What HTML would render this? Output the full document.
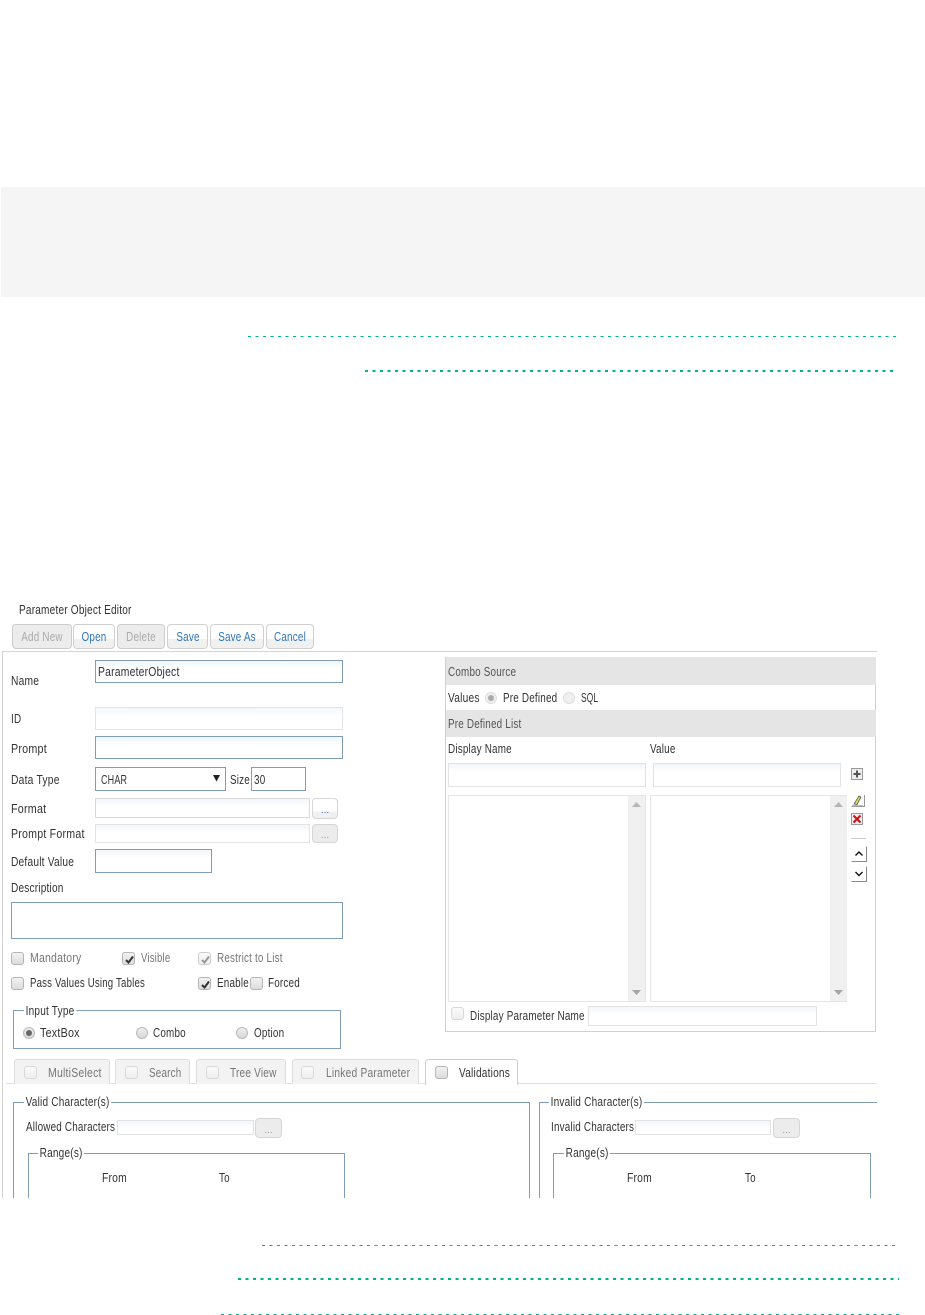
<!DOCTYPE html>
<html><head><meta charset="utf-8"><title>Parameter Object Editor</title>
<style>
html,body{margin:0;padding:0;background:#fff}
body{width:925px;height:1315px;position:relative;overflow:hidden;font-family:"Liberation Sans",sans-serif;font-size:12.5px;color:#333}
#c{position:absolute;left:0;top:0;width:925px;height:1198px;overflow:hidden}
#c *,body>*{position:absolute;box-sizing:border-box}
.t{white-space:nowrap;line-height:14px;height:14px;letter-spacing:.25px;transform:scaleX(.79);transform-origin:0 0}
.g{color:#777}
.btn{height:25px;top:624px;border:1px solid #d0d0d0;border-radius:4px;background:linear-gradient(#fff 60%,#f0f0f0 60%);line-height:24px;color:#2f75b5;white-space:nowrap;letter-spacing:.25px}
.btn span{left:50%;top:0;transform:translateX(-50%) scaleX(.79)}
.btn.d{background:#ececec;color:#aaa;border-color:#ccc}
.i{border:1px solid #7f9db9;background:linear-gradient(#f1f6fb,#fff 8px)}
.l{border:1px solid #e3e3e3;background:linear-gradient(#f1f6fb,#fff 8px)}
.el{border:1px solid #d6d6d6;border-radius:4px;background:linear-gradient(#fff 65%,#f0f0f0 65%);color:#2f75b5;text-align:center;font-size:10px;line-height:24px}
.el.d{background:#ececec;color:#999}
.cb{width:13px;height:13px;border:1px solid #b5b5b5;border-radius:3px;background:linear-gradient(#f2f2f2,#dcdcdc)}
.cb.f{border-color:#d8d8d8;background:linear-gradient(#fafafa,#efefef)}
.cb svg{left:1px;top:1px}
.r{width:12px;height:12px;border:1px solid #bbb;border-radius:50%;background:linear-gradient(#eee,#d8d8d8)}
.r i{left:2px;top:2px;width:6px;height:6px;border-radius:50%;background:#666}
.fs{border:1px solid #7f9db9}
.lg{background:#fff;padding:0 2px;white-space:nowrap;line-height:14px;height:14px;letter-spacing:.25px;transform:scaleX(.805);transform-origin:0 0}
.tab{top:1059px;height:25px;border:1px solid #ddd;border-bottom:none;border-radius:3px 3px 0 0;background:#f3f3f3}
.sb{background:#f0f0f0}
.dot1{height:1px;background:repeating-linear-gradient(90deg,#00b388 0 3px,transparent 3px 7.5px)}
.dot2{height:2px;background:repeating-linear-gradient(90deg,#00b388 0 3px,transparent 3px 7.5px)}
</style></head><body>
<div style="left:1px;top:187px;width:924px;height:110px;background:#f5f5f5"></div>
<div class="dot1" style="left:248px;top:336px;width:649px"></div>
<div class="dot2" style="left:365px;top:370px;width:529px"></div>
<div class="dot1" style="left:262px;top:1245px;width:635px"></div>
<div class="dot2" style="left:238px;top:1278px;width:661px"></div>
<div class="dot1" style="left:221px;top:1314px;width:678px"></div>

<div id="c">
<div class="t" style="left:19px;top:603px;transform:scaleX(.805)">Parameter Object Editor</div>
<div class="btn d" style="left:12px;width:60px"><span>Add New</span></div>
<div class="btn" style="left:73px;width:42px"><span>Open</span></div>
<div class="btn d" style="left:117px;width:48px"><span>Delete</span></div>
<div class="btn" style="left:167px;width:41px"><span>Save</span></div>
<div class="btn" style="left:210px;width:54px"><span>Save As</span></div>
<div class="btn" style="left:266px;width:48px"><span>Cancel</span></div>
<div style="left:2px;top:651px;width:875px;height:1px;background:#d4d4d4"></div>
<div style="left:2px;top:651px;width:1px;height:550px;background:#d4d4d4"></div>

<div class="t" style="left:11px;top:674px;transform:scaleX(.82)">Name</div>
<div class="i" style="left:95px;top:660px;width:248px;height:23px"></div>
<div class="t" style="left:98px;top:665px;transform:scaleX(.83)">ParameterObject</div>
<div class="t" style="left:11px;top:712px">ID</div>
<div class="l" style="left:95px;top:707px;width:248px;height:23px"></div>
<div class="t" style="left:11px;top:742px;transform:scaleX(.86)">Prompt</div>
<div class="i" style="left:95px;top:736px;width:248px;height:23px"></div>
<div class="t" style="left:11px;top:773px;transform:scaleX(.825)">Data Type</div>
<div style="left:95px;top:767px;width:131px;height:24px;border:1px solid #7f9db9;background:#fff"></div>
<div class="t" style="left:101px;top:773px;transform:scaleX(.72)">CHAR</div>
<svg style="left:213px;top:775px" width="8" height="7"><path d="M0 0H7L3.5 6.5Z" fill="#222"/></svg>
<div class="t" style="left:230px;top:773px">Size</div>
<div style="left:251px;top:767px;width:55px;height:24px;border:1px solid #7f9db9;background:#fff"></div>
<div class="t" style="left:254px;top:773px">30</div>
<div class="t" style="left:11px;top:802px;transform:scaleX(.86)">Format</div>
<div class="l" style="left:95px;top:798px;width:215px;height:20px;border-color:#d8d8d8"></div>
<div class="el" style="left:312px;top:798px;width:26px;height:21px">...</div>
<div class="t" style="left:11px;top:827px;transform:scaleX(.85)">Prompt Format</div>
<div class="l" style="left:95px;top:824px;width:215px;height:19px"></div>
<div class="el d" style="left:312px;top:824px;width:26px;height:19px;line-height:22px">...</div>
<div class="t" style="left:11px;top:855px;transform:scaleX(.815)">Default Value</div>
<div class="i" style="left:95px;top:849px;width:117px;height:24px"></div>
<div class="t" style="left:11px;top:881px;transform:scaleX(.805)">Description</div>
<div style="left:11px;top:902px;width:332px;height:37px;border:1px solid #7f9db9;background:#fff"></div>

<div class="cb" style="left:11px;top:952px"></div>
<div class="t g" style="left:30px;top:951px;transform:scaleX(.84)">Mandatory</div>
<div class="cb" style="left:122px;top:952px"><svg width="11" height="11"><path d="M2 6L4.5 8.5L9 2.5" stroke="#333" stroke-width="2" fill="none"/></svg></div>
<div class="t g" style="left:141px;top:951px;transform:scaleX(.765)">Visible</div>
<div class="cb f" style="left:198px;top:952px;border-color:#ccc"><svg width="11" height="11"><path d="M2 6L4.5 8.5L9 2.5" stroke="#999" stroke-width="2" fill="none"/></svg></div>
<div class="t g" style="left:217px;top:951px">Restrict to List</div>
<div class="cb" style="left:11px;top:977px"></div>
<div class="t" style="left:30px;top:976px;transform:scaleX(.77)">Pass Values Using Tables</div>
<div class="cb" style="left:198px;top:977px"><svg width="11" height="11"><path d="M2 6L4.5 8.5L9 2.5" stroke="#333" stroke-width="2" fill="none"/></svg></div>
<div class="t" style="left:217px;top:976px">Enable</div>
<div class="cb" style="left:250px;top:977px"></div>
<div class="t" style="left:268px;top:976px">Forced</div>

<div class="fs" style="left:13px;top:1010px;width:328px;height:39px"></div>
<div class="lg" style="left:23.5px;top:1004px">Input Type</div>
<div class="r" style="left:23px;top:1027px"><i></i></div>
<div class="t" style="left:40px;top:1026px;transform:scaleX(.86)">TextBox</div>
<div class="r" style="left:136px;top:1027px"></div>
<div class="t" style="left:153px;top:1026px">Combo</div>
<div class="r" style="left:236px;top:1027px"></div>
<div class="t" style="left:254px;top:1026px">Option</div>

<div style="left:445px;top:657px;width:431px;height:375px;border:1px solid #d0d0d0"></div>
<div style="left:446px;top:657px;width:430px;height:28px;background:#e5e5e5"></div>
<div class="t" style="left:448px;top:665px;color:#555">Combo Source</div>
<div class="t" style="left:448px;top:691px;transform:scaleX(.815)">Values</div>
<div class="r" style="left:485px;top:692px;border-color:#ddd;background:#f0f0f0"><i style="background:#aaa"></i></div>
<div class="t" style="left:503px;top:691px">Pre Defined</div>
<div class="r" style="left:563px;top:692px;border-color:#ddd;background:#f0f0f0"></div>
<div class="t" style="left:581px;top:691px;transform:scaleX(.67)">SQL</div>
<div style="left:446px;top:710px;width:430px;height:27px;background:#e5e5e5"></div>
<div class="t" style="left:448px;top:717px;color:#555">Pre Defined List</div>
<div class="t" style="left:448px;top:742px">Display Name</div>
<div class="t" style="left:650px;top:742px">Value</div>
<div class="l" style="left:448px;top:763px;width:198px;height:24px"></div>
<div class="l" style="left:653px;top:763px;width:188px;height:24px"></div>

<div style="left:448px;top:795px;width:198px;height:207px;border:1px solid #e6e6e6;background:#fff"></div>
<div class="sb" style="left:628px;top:796px;width:17px;height:205px"></div>
<svg style="left:632px;top:802px" width="9" height="5"><path d="M4.5 0L9 5H0Z" fill="#b5b5b5"/></svg>
<svg style="left:632px;top:990px" width="9" height="5"><path d="M4.5 5L9 0H0Z" fill="#a5a5a5"/></svg>
<div style="left:650px;top:795px;width:197px;height:207px;border:1px solid #e6e6e6;background:#fff"></div>
<div class="sb" style="left:830px;top:796px;width:17px;height:205px"></div>
<svg style="left:834px;top:802px" width="9" height="5"><path d="M4.5 0L9 5H0Z" fill="#b5b5b5"/></svg>
<svg style="left:834px;top:990px" width="9" height="5"><path d="M4.5 5L9 0H0Z" fill="#a5a5a5"/></svg>

<svg style="left:851px;top:768px" width="12" height="12"><rect x=".5" y=".5" width="11" height="11" fill="#eee" stroke="#999"/><path d="M6 2.5V9.5M2.5 6H9.5" stroke="#555" stroke-width="2"/></svg>
<svg style="left:851px;top:794px" width="14" height="13"><path d="M.5 12.5H13.5V1" fill="none" stroke="#999"/><path d="M3 10L8 2L10 3L6 10.5Z" fill="#e8e04a" stroke="#555" stroke-width=".8"/><path d="M1 11.5H12" stroke="#bbb"/></svg>
<svg style="left:851px;top:813px" width="12" height="12"><rect x=".5" y=".5" width="11" height="11" fill="#eee" stroke="#999"/><path d="M2.5 2.5L9.5 9.5M9.5 2.5L2.5 9.5" stroke="#d01010" stroke-width="2"/></svg>
<div style="left:851px;top:838px;width:15px;height:1px;background:#ccc"></div>
<svg style="left:851px;top:846px" width="16" height="16"><path d="M.5 15.5H15.5V.5" fill="none" stroke="#888"/><path d="M4.5 9.5L8 6L11.5 9.5" fill="none" stroke="#111" stroke-width="1.4"/></svg>
<svg style="left:851px;top:866px" width="16" height="16"><path d="M.5 15.5H15.5V.5" fill="none" stroke="#888"/><path d="M4.5 6L8 9.5L11.5 6" fill="none" stroke="#111" stroke-width="1.4"/></svg>

<div class="cb f" style="left:451px;top:1007px"></div>
<div class="t" style="left:470px;top:1009px;width:147px;overflow:hidden">Display Parameter Name</div>
<div class="l" style="left:588px;top:1006px;width:229px;height:20px"></div>

<div style="left:6px;top:1083px;width:871px;height:1px;background:#e0e0e0"></div>
<div class="tab" style="left:14px;width:96px"></div>
<div class="cb f" style="left:24px;top:1066px"></div>
<div class="t g" style="left:48px;top:1066px;transform:scaleX(.84)">MultiSelect</div>
<div class="tab" style="left:115px;width:75px"></div>
<div class="cb f" style="left:125px;top:1066px"></div>
<div class="t g" style="left:149px;top:1066px">Search</div>
<div class="tab" style="left:196px;width:90px"></div>
<div class="cb f" style="left:206px;top:1066px"></div>
<div class="t g" style="left:230px;top:1066px;transform:scaleX(.805)">Tree View</div>
<div class="tab" style="left:292px;width:127px"></div>
<div class="cb f" style="left:301px;top:1066px"></div>
<div class="t g" style="left:326px;top:1066px;transform:scaleX(.82)">Linked Parameter</div>
<div class="tab" style="left:425px;width:93px;background:#fff;height:26px;border-color:#ccc"></div>
<div class="cb" style="left:435px;top:1066px"></div>
<div class="t" style="left:459px;top:1066px;transform:scaleX(.81)">Validations</div>

<div class="fs" style="left:13px;top:1102px;width:517px;height:120px"></div>
<div class="lg" style="left:23.5px;top:1095px">Valid Character(s)</div>
<div class="t" style="left:26px;top:1120px">Allowed Characters</div>
<div class="l" style="left:117px;top:1120px;width:137px;height:15px"></div>
<div class="el d" style="left:255px;top:1118px;width:27px;height:20px">...</div>
<div class="fs" style="left:28px;top:1153px;width:317px;height:80px"></div>
<div class="lg" style="left:37.5px;top:1146px">Range(s)</div>
<div class="t" style="left:102px;top:1171px;transform:scaleX(.825)">From</div>
<div class="t" style="left:219px;top:1171px">To</div>

<div class="fs" style="left:539px;top:1102px;width:360px;height:120px"></div>
<div style="left:877px;top:1095px;width:48px;height:110px;background:#fff"></div>
<div class="lg" style="left:548.5px;top:1095px">Invalid Character(s)</div>
<div class="t" style="left:551px;top:1120px">Invalid Characters</div>
<div class="l" style="left:635px;top:1120px;width:136px;height:15px"></div>
<div class="el d" style="left:773px;top:1118px;width:27px;height:20px">...</div>
<div class="fs" style="left:553px;top:1153px;width:318px;height:80px"></div>
<div class="lg" style="left:563.5px;top:1146px">Range(s)</div>
<div class="t" style="left:627px;top:1171px;transform:scaleX(.825)">From</div>
<div class="t" style="left:745px;top:1171px">To</div>
</div>
</body></html>
